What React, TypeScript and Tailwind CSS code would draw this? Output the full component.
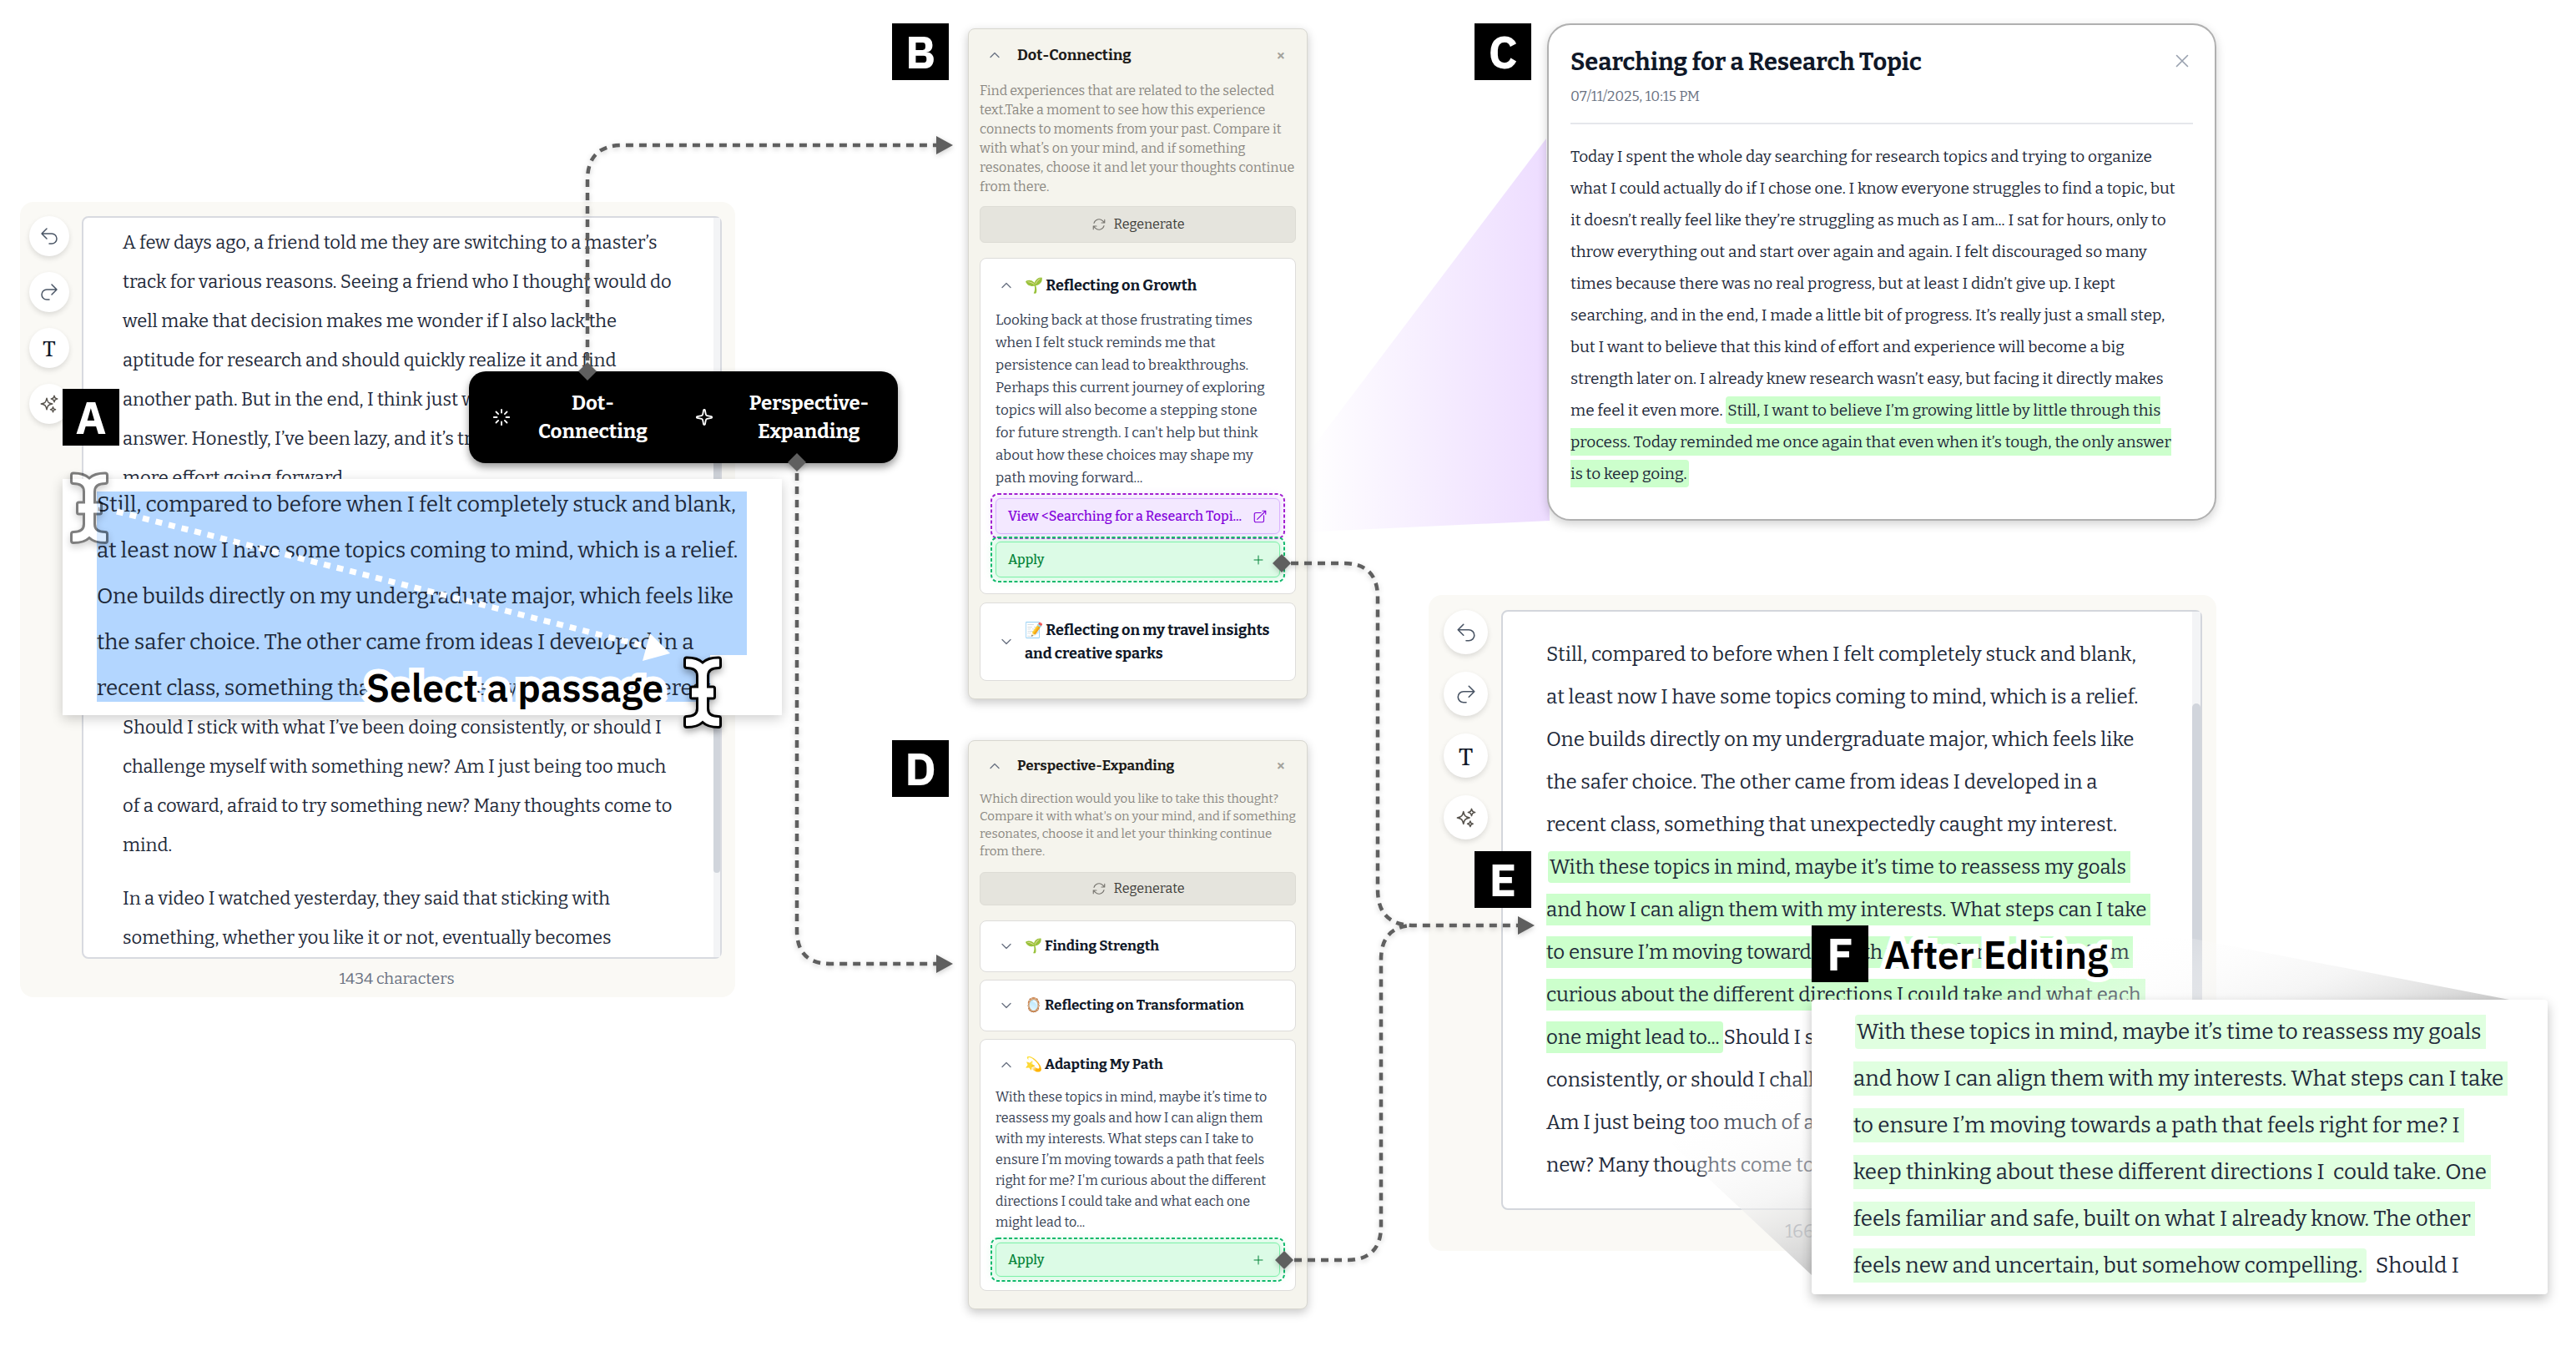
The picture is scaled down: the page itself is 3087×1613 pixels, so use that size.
import type { ReactNode } from "react";
import { Loader, Sparkle } from "lucide-react";
import {
  HiOutlineArrowPath,
  HiOutlineArrowTopRightOnSquare,
  HiOutlineArrowUturnLeft,
  HiOutlineArrowUturnRight,
  HiOutlineChevronDown,
  HiOutlineChevronUp,
  HiOutlinePlus,
  HiOutlineSparkles,
  HiOutlineXMark,
} from "react-icons/hi2";

const cx = (...parts: (string | false | undefined)[]) => parts.filter(Boolean).join(" ");

const DRAFT_TOP = [
  "A few days ago, a friend told me they are switching to a master’s",
  "track for various reasons. Seeing a friend who I thought would do",
  "well make that decision makes me wonder if I also lack the",
  "aptitude for research and should quickly realize it and find",
  "another path. But in the end, I think just w",
  "answer. Honestly, I’ve been lazy, and it’s tr",
  "more effort going forward.",
].join("\n");

const DRAFT_MIDDLE = [
  "Should I stick with what I’ve been doing consistently, or should I",
  "challenge myself with something new? Am I just being too much",
  "of a coward, afraid to try something new? Many thoughts come to",
  "mind.",
].join("\n");

const DRAFT_BOTTOM = [
  "In a video I watched yesterday, they said that sticking with",
  "something, whether you like it or not, eventually becomes",
].join("\n");

const PASSAGE = [
  "Still, compared to before when I felt completely stuck and blank,",
  "at least now I have some topics coming to mind, which is a relief.",
  "One builds directly on my undergraduate major, which feels like",
  "the safer choice. The other came from ideas I developed in a",
  "recent class, something that unexpectedly caught my interest.",
].join("\n");

const INSERTED = [
  "With these topics in mind, maybe it’s time to reassess my goals ",
  "and how I can align them with my interests. What steps can I take ",
  "to ensure I’m moving towards a path that feels right for me? I’m ",
  "curious about the different directions I could take and what each ",
  "one might lead to... ",
].join("\n");

const REMAINDER = [
  "Should I s",
  "consistently, or should I chall",
  "Am I just being too much of a",
  "new? Many thoughts come to",
].join("\n");

const EDITED = [
  "With these topics in mind, maybe it’s time to reassess my goals ",
  "and how I can align them with my interests. What steps can I take ",
  "to ensure I’m moving towards a path that feels right for me? I ",
  "keep thinking about these different directions I  could take. One ",
  "feels familiar and safe, built on what I already know. The other ",
  "feels new and uncertain, but somehow compelling. ",
].join("\n");

const GROWTH = [
  "Looking back at those frustrating times",
  "when I felt stuck reminds me that",
  "persistence can lead to breakthroughs.",
  "Perhaps this current journey of exploring",
  "topics will also become a stepping stone",
  "for future strength. I can't help but think",
  "about how these choices may shape my",
  "path moving forward...",
].join("\n");

const ADAPTING = [
  "With these topics in mind, maybe it’s time to",
  "reassess my goals and how I can align them",
  "with my interests. What steps can I take to",
  "ensure I’m moving towards a path that feels",
  "right for me? I'm curious about the different",
  "directions I could take and what each one",
  "might lead to...",
].join("\n");

const ENTRY = [
  "Today I spent the whole day searching for research topics and trying to organize",
  "what I could actually do if I chose one. I know everyone struggles to find a topic, but",
  "it doesn’t really feel like they’re struggling as much as I am... I sat for hours, only to",
  "throw everything out and start over again and again. I felt discouraged so many",
  "times because there was no real progress, but at least I didn’t give up. I kept",
  "searching, and in the end, I made a little bit of progress. It’s really just a small step,",
  "but I want to believe that this kind of effort and experience will become a big",
  "strength later on. I already knew research wasn’t easy, but facing it directly makes",
  "me feel it even more. ",
].join("\n");

const ENTRY_QUOTE = [
  "Still, I want to believe I’m growing little by little through this",
  "process. Today reminded me once again that even when it’s tough, the only answer",
  "is to keep going.",
].join("\n");

function Badge({ letter, className }: { letter: string; className?: string }) {
  return (
    <div
      className={cx(
        "flex h-[68px] w-[68px] shrink-0 items-center justify-center bg-black font-['IBM_Plex_Sans','Noto_Sans',sans-serif] text-[54px] leading-none font-bold text-white",
        className,
      )}
    >
      {letter}
    </div>
  );
}

function Caption({ children, className }: { children: ReactNode; className?: string }) {
  return (
    <p
      className={cx(
        "font-['IBM_Plex_Sans','Noto_Sans',sans-serif] text-[46px] leading-none font-semibold whitespace-nowrap text-black [-webkit-text-stroke:12px_white] [paint-order:stroke_fill]",
        className,
      )}
    >
      {children}
    </p>
  );
}

function Tools({ large }: { large?: boolean }) {
  const button = cx(
    "flex items-center justify-center rounded-full bg-white text-gray-600 shadow-[0_3px_6px_rgba(0,0,0,0.12)]",
    large ? "h-[53px] w-[53px]" : "h-12 w-12",
  );
  const icon = large ? "h-[26px] w-[26px]" : "h-6 w-6";
  return (
    <div className={cx("flex shrink-0 flex-col", large ? "gap-[21px]" : "gap-[19px]")}>
      <button className={button} aria-label="Undo">
        <HiOutlineArrowUturnLeft className={icon} />
      </button>
      <button className={button} aria-label="Redo">
        <HiOutlineArrowUturnRight className={icon} />
      </button>
      <button
        className={cx(
          button,
          "font-['Noto_Serif',serif] leading-none text-gray-900",
          large ? "text-[28px]" : "text-[25px]",
        )}
      >
        T
      </button>
      <button className={cx(button, "text-stone-600")} aria-label="Assist">
        <HiOutlineSparkles className={icon} />
      </button>
    </div>
  );
}

/* Short dashed outline with a soft glow around a button */
function Outlined({ stroke, glow, children }: { stroke: string; glow: string; children: ReactNode }) {
  return (
    <div className={cx("relative flex", glow)}>
      <svg className="pointer-events-none absolute -inset-[5px] h-[calc(100%+10px)] w-[calc(100%+10px)] overflow-visible">
        <rect width="100%" height="100%" rx="8" fill="none" stroke={stroke} strokeWidth="2" strokeDasharray="4 2.5" />
      </svg>
      {children}
    </div>
  );
}

function ApplyButton({ className }: { className?: string }) {
  return (
    <Outlined stroke="#10b96c" glow="rounded-lg shadow-[0_0_10px_4px_rgba(134,239,172,0.35)]">
      <button
        className={cx(
          "flex flex-1 items-center justify-between rounded-md border border-green-300 bg-[#dcfbe6] pr-[17px] pl-[14px] text-[16px] font-medium text-green-700",
          className,
        )}
      >
        Apply
        <HiOutlinePlus className="h-4 w-4" />
      </button>
    </Outlined>
  );
}

function Panel({
  title,
  description,
  className,
  headerClass,
  titleClass,
  descriptionClass,
  regenerateClass,
  children,
}: {
  title: string;
  description: string;
  className?: string;
  headerClass: string;
  titleClass: string;
  descriptionClass: string;
  regenerateClass: string;
  children: ReactNode;
}) {
  return (
    <section
      className={cx(
        "flex min-w-0 flex-1 flex-col rounded-lg border border-[#d8d7d0] bg-[#f5f4ed] px-[13px] pb-[21px] shadow-[0_4px_12px_rgba(0,0,0,0.22)]",
        className,
      )}
    >
      <header className={cx("flex items-center pr-[13px] pl-[10px]", headerClass)}>
        <button aria-label="Collapse" className="text-gray-500">
          <HiOutlineChevronUp className="h-4 w-4" strokeWidth={2} />
        </button>
        <h2 className={cx("ml-[19px] flex-1 font-bold text-[#1c1b19]", titleClass)}>{title}</h2>
        <button aria-label="Close" className="font-['Noto_Sans',sans-serif] text-[18px] font-bold text-[#a3a29c]">
          ×
        </button>
      </header>
      <p className={cx("whitespace-pre text-[#8b8882]", descriptionClass)}>{description}</p>
      <button
        className={cx(
          "flex items-center justify-center gap-[9px] rounded-md border border-[#dddcd5] bg-[#e5e4dd] text-[16px] text-[#3d3c39]",
          regenerateClass,
        )}
      >
        <HiOutlineArrowPath className="h-[18px] w-[18px] text-[#77756f]" />
        Regenerate
      </button>
      {children}
    </section>
  );
}

function Idea({
  title,
  open,
  className,
  children,
}: {
  title: string;
  open?: boolean;
  className: string;
  children?: ReactNode;
}) {
  const Chevron = open ? HiOutlineChevronUp : HiOutlineChevronDown;
  return (
    <article className="rounded-lg border border-[#dddcda] bg-white">
      <button
        className={cx("flex w-full items-center gap-[14px] pl-[23px] text-left leading-7 font-bold text-gray-900", className)}
      >
        <Chevron className="h-4 w-4 shrink-0 text-gray-500" strokeWidth={2} />
        <span className="whitespace-pre">{title}</span>
      </button>
      {children}
    </article>
  );
}

const BEAM =
  "M4 2C12 2 19 4 23 8C27 4 34 2 42 2Q44.5 2 44.5 4.5V12Q44.5 14.5 42 14.5C33 14.5 29.5 18 29.5 24V37H35.5Q37.5 37 37.5 39V49Q37.5 51 35.5 51H29.5V63C29.5 69 33 72.5 42 72.5Q44.5 72.5 44.5 75V83Q44.5 85.5 42 85.5C34 85.5 27 83.5 23 79.5C19 83.5 12 85.5 4 85.5Q1.5 85.5 1.5 83V75Q1.5 72.5 4 72.5C13 72.5 16.5 69 16.5 63V51H10.5Q8.5 51 8.5 49V39Q8.5 37 10.5 37H16.5V24C16.5 18 13 14.5 4 14.5Q1.5 14.5 1.5 12V4.5Q1.5 2 4 2Z";

function TextCursor({ className }: { className?: string }) {
  return (
    <svg
      viewBox="0 0 46 87"
      className={cx("absolute h-[87px] w-[46px] overflow-visible drop-shadow-[0_4px_4px_rgba(0,0,0,0.35)]", className)}
    >
      <path d={BEAM} fill="#fff" stroke="#000" strokeWidth="3" />
    </svg>
  );
}

function Connectors() {
  return (
    <svg
      viewBox="0 0 3087 1613"
      className="pointer-events-none absolute inset-x-0 top-0 z-30 w-full drop-shadow-[0_2px_3px_rgba(0,0,0,0.2)]"
    >
      <g fill="none" stroke="#5f5f5f" strokeWidth="4.5" strokeDasharray="9 7">
        <path d="M704 432V216Q704 174 746 174H1122" />
        <path d="M955 567V1115Q955 1155 995 1155H1122" />
        <path d="M1547 675H1610Q1651 675 1651 716V1066Q1651 1108 1692 1109H1819" />
        <path d="M1551 1510H1614Q1655 1510 1655 1469V1150Q1655 1112 1690 1109" />
      </g>
      <g fill="#5f5f5f">
        <path d="M1122 163L1142 174L1122 185Z" />
        <path d="M1122 1144L1142 1155L1122 1166Z" />
        <path d="M1819 1098L1839 1109L1819 1120Z" />
        <path d="M704 434L715 445L704 456L693 445Z" />
        <path d="M955 543L966 554L955 565L944 554Z" />
        <path d="M1536 664L1547 675L1536 686L1525 675Z" />
        <path d="M1539 1499L1550 1510L1539 1521L1528 1510Z" />
      </g>
    </svg>
  );
}

function DraftEditor() {
  return (
    <section className="relative pt-[242px] pl-6">
      <div className="flex w-[82%] gap-[15px] rounded-2xl bg-[#faf9f5] pt-[17px] pr-4 pb-2 pl-[11px]">
        <Tools />
        <div className="flex-1">
          <div className="flex justify-between rounded-lg border-2 border-[#d8dae0] bg-white">
            <div className="flex flex-col gap-[17px] pt-[6px] pl-[47px] text-[22px] leading-[47px] whitespace-pre text-gray-800">
              <p>{DRAFT_TOP}</p>
              <div>
                <div className="h-[235px]" />
                <p>{DRAFT_MIDDLE}</p>
              </div>
              <p>{DRAFT_BOTTOM}</p>
            </div>
            <div className="flex w-2 flex-col bg-gray-100">
              <div className="mt-[240px] h-[545px] rounded-full bg-gray-300" />
            </div>
          </div>
          <p className="mt-[10px] pr-3 text-center text-[19px] leading-7 text-gray-500">1434 characters</p>
        </div>
      </div>

      {/* Enlarged passage with its selection */}
      <div className="absolute top-[574px] left-[75px] w-[862px] bg-white pt-[3px] pb-[5px] pl-[41px] shadow-[0_4px_14px_rgba(0,0,0,0.2)]">
        <div className="absolute top-[15px] left-[41px] h-[196px] w-[779px] bg-[#b3d6ff]" />
        <div className="absolute top-[211px] left-[41px] h-14 w-[735px] bg-[#b3d6ff]" />
        <p className="relative text-[26px] leading-[55px] whitespace-pre text-gray-800">{PASSAGE}</p>
      </div>
      <svg viewBox="0 0 680 190" className="absolute top-[605px] left-[135px] w-[680px]">
        <path d="M5 8L640 170" stroke="#fff" strokeWidth="7" strokeDasharray="8 8" />
        <path d="M644 154L668 178L635 187Z" fill="#fff" />
      </svg>
      <TextCursor className="top-[565px] left-[84px] opacity-50" />
      <Caption className="absolute top-[801px] left-[439px]">Select a passage</Caption>
      <TextCursor className="top-[786px] left-[819px]" />
      <Badge letter="A" className="absolute top-[466px] left-[75px]" />

      {/* Floating actions */}
      <div className="absolute top-[445px] left-[562px] z-20 grid h-[110px] w-[514px] grid-cols-[219px_243px] gap-6 rounded-[20px] bg-black pl-7 text-center text-[24px] leading-[34px] font-bold text-white shadow-[0_5px_10px_rgba(0,0,0,0.4)]">
        <button className="flex items-center">
          <Loader className="h-[22px] w-[22px] shrink-0" strokeWidth={2} />
          <span className="flex-1">
            Dot-
            <br />
            Connecting
          </span>
        </button>
        <button className="flex items-center">
          <Sparkle className="h-[22px] w-[22px] shrink-0" strokeWidth={2} />
          <span className="flex-1 pl-2">
            Perspective-
            <br />
            Expanding
          </span>
        </button>
      </div>
    </section>
  );
}

function Suggestions() {
  return (
    <section className="relative z-10 flex flex-col gap-[49px] pt-7">
      <div className="flex items-start gap-[23px]">
        <Badge letter="B" />
        <Panel
          className="mt-[6px]"
          title="Dot-Connecting"
          headerClass="h-[62px]"
          titleClass="text-[18px]"
          descriptionClass="text-[16px] leading-[23px]"
          regenerateClass="mt-3 h-11 mb-[18px]"
          description={
            "Find experiences that are related to the selected\ntext.Take a moment to see how this experience\nconnects to moments from your past. Compare it\nwith what’s on your mind, and if something\nresonates, choose it and let your thoughts continue\nfrom there."
          }
        >
          <div className="flex flex-col gap-[10px]">
            <Idea open title="🌱 Reflecting on Growth" className="mt-1 h-14 text-[18px]">
              <div className="flex flex-col px-[18px] pb-[19px]">
                <p className="text-[17px] leading-[27px] whitespace-pre text-gray-700">{GROWTH}</p>
                <div className="mt-[11px] flex flex-col gap-[9px]">
                  <Outlined stroke="#a21fd0" glow="rounded-lg shadow-[0_0_10px_4px_rgba(216,180,254,0.4)]">
                    <button className="flex h-[43px] flex-1 items-center justify-between rounded-md border border-purple-300 bg-purple-100 px-[14px] text-[16px] font-medium text-purple-700">
                      {"View <Searching for a Research Topi..."}
                      <HiOutlineArrowTopRightOnSquare className="h-[18px] w-[18px]" />
                    </button>
                  </Outlined>
                  <ApplyButton className="h-[43px]" />
                </div>
              </div>
            </Idea>
            <Idea title={"📝 Reflecting on my travel insights\nand creative sparks"} className="py-[18px] text-[18px]" />
          </div>
        </Panel>
      </div>

      <div className="flex items-start gap-[23px]">
        <Badge letter="D" />
        <Panel
          title="Perspective-Expanding"
          headerClass="h-[59px]"
          titleClass="text-[17px]"
          descriptionClass="text-[15px] leading-[21px]"
          regenerateClass="mt-[14px] h-10 mb-[18px]"
          description={
            "Which direction would you like to take this thought?\nCompare it with what's on your mind, and if something\nresonates, choose it and let your thinking continue\nfrom there."
          }
        >
          <div className="flex flex-col gap-[9px]">
            <Idea title="🌱 Finding Strength" className="h-[60px] text-[17px]" />
            <Idea title="🪞 Reflecting on Transformation" className="h-[60px] text-[17px]" />
            <Idea open title="💫 Adapting My Path" className="h-14 pt-[3px] text-[17px]">
              <div className="flex flex-col gap-3 px-[18px] pb-4">
                <p className="text-[16px] leading-[25px] whitespace-pre text-gray-700">{ADAPTING}</p>
                <ApplyButton className="h-[41px]" />
              </div>
            </Idea>
          </div>
        </Panel>
      </div>
    </section>
  );
}

function Results() {
  return (
    <section className="relative pt-7 pr-[431px] pl-[145px]">
      <svg viewBox="0 0 320 480" className="absolute top-[160px] left-[-30px] w-[320px]">
        <defs>
          <linearGradient id="violet">
            <stop offset="0.1" stopColor="#eddcff" stopOpacity="0" />
            <stop offset="1" stopColor="#eddcff" />
          </linearGradient>
        </defs>
        <path d="M316 6L0 424V479L320 464Z" fill="url(#violet)" />
      </svg>

      <div className="relative flex items-start gap-[19px] pl-[55px]">
        <Badge letter="C" />
        <article className="min-w-0 flex-1 rounded-[28px] border-2 border-[#b0b0b0] bg-white px-[26px] pb-[35px] shadow-[0_4px_12px_rgba(0,0,0,0.18)]">
          <header className="flex items-start justify-between border-b-2 border-gray-200 pt-[26px] pb-[19px]">
            <div>
              <h2 className="text-[29px] leading-[38px] font-bold text-gray-900">Searching for a Research Topic</h2>
              <p className="mt-[10px] text-[17px] leading-6 text-gray-500">07/11/2025, 10:15 PM</p>
            </div>
            <button aria-label="Close" className="mt-1 text-gray-400">
              <HiOutlineXMark className="h-[26px] w-[26px]" />
            </button>
          </header>
          <p className="mt-5 text-[19px] leading-[38px] whitespace-pre text-gray-800">
            {ENTRY}
            <mark className="rounded bg-[#ccffcc] px-[2px] py-[5px] text-gray-800">{ENTRY_QUOTE}</mark>
          </p>
        </article>
      </div>

      <div className="mt-[89px] flex gap-4 rounded-2xl bg-[#faf9f5] pt-[18px] pr-[17px] pb-[7px] pl-[18px]">
        <Tools large />
        <div className="min-w-0 flex-1">
          <div className="flex justify-between rounded-lg border-2 border-[#d3d6dc] bg-white">
            <p className="py-[26px] pl-[52px] text-[24px] leading-[51px] whitespace-pre text-gray-800">
              {PASSAGE}
              <br />
              <mark className="ml-[2px] rounded bg-[#ccffcc] py-[5px] pl-[2px] text-gray-800">{INSERTED}</mark>
              {REMAINDER}
            </p>
            <div className="flex w-[10px] flex-col bg-gray-100">
              <div className="mt-[110px] flex-1 rounded-full bg-gray-300" />
            </div>
          </div>
          <p className="mt-[10px] text-center text-[22px] leading-8 text-gray-500">1663 characters</p>
        </div>
      </div>
      <Badge letter="E" className="absolute top-[1020px] left-[200px]" />

      {/* Zoomed result after editing */}
      <svg viewBox="0 0 1040 440" className="absolute top-[1100px] left-[420px] w-[1040px]">
        <defs>
          <linearGradient id="shade" gradientUnits="userSpaceOnUse" x1="304" y1="116" x2="391" y2="336">
            <stop offset="0" stopColor="#fff" stopOpacity="0" />
            <stop offset="0.3" stopColor="#fafafa" stopOpacity="0.35" />
            <stop offset="0.6" stopColor="#efefef" stopOpacity="0.6" />
            <stop offset="0.8" stopColor="#dedede" stopOpacity="0.75" />
            <stop offset="1" stopColor="#cfcfcf" />
          </linearGradient>
        </defs>
        <path d="M16 271L180 100L500 20L642 25L1020 98L184 428Z" fill="url(#shade)" />
      </svg>
      <Caption className="absolute top-[1121px] left-[691px]">After Editing</Caption>
      <Badge letter="F" className="absolute top-[1109px] left-[604px]" />
      <div className="absolute top-[1198px] right-[34px] left-[604px] rounded bg-white pt-[11px] pb-[6px] pl-[50px] shadow-[0_6px_14px_rgba(0,0,0,0.25)]">
        <p className="text-[26px] leading-[56px] whitespace-pre text-gray-800">
          <mark className="ml-[2px] rounded bg-[#e0ffe0] py-[5px] pl-[2px] text-gray-800">{EDITED}</mark>
          {"  Should I"}
        </p>
      </div>
    </section>
  );
}

export default function App() {
  return (
    <main className="relative grid min-h-screen grid-cols-[minmax(0,1069fr)_minmax(0,498fr)_minmax(0,1520fr)] items-start overflow-hidden bg-white font-['Bitter','Noto_Serif','DejaVu_Serif',serif]">
      <DraftEditor />
      <Suggestions />
      <Results />
      <Connectors />
    </main>
  );
}
